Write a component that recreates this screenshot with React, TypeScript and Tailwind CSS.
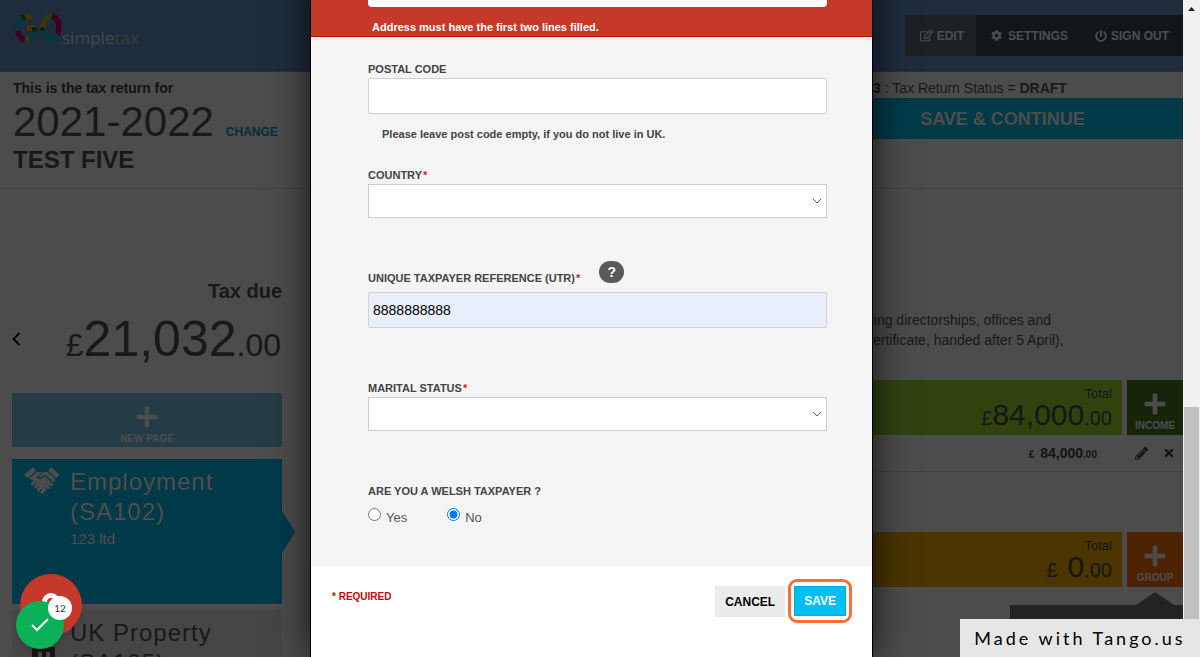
import { useState, type ReactNode } from "react";
import { FaCog, FaPencilAlt, FaPlus, FaPowerOff, FaRegEdit, FaTimes } from "react-icons/fa";

function LogoMark() {
  return (
    <svg width="48" height="31" viewBox="0 0 48 31" fill="none" strokeWidth="5.500">
      <path d="M3.500 18 Q4 9 9 5" stroke="#18b4d8" />
      <path d="M11 5 Q14 4 18 6" stroke="#f0a000" />
      <path d="M8 6 L11 4.500" stroke="#0a7a28" />
      <path d="M3.500 19 Q5 26 11 28" stroke="#d4006c" />
      <path d="M11 27 L15 27" stroke="#98c83c" />
      <path d="M20 18 Q20.500 23 17 26" stroke="#18b4d8" />
      <path d="M13 16 H22" stroke="#f0a000" />
      <path d="M18 17.500 H23" stroke="#0a7a28" strokeWidth="4" />
      <path d="M43 22 Q40 28 34 27 Q29 25 28.500 19" stroke="#18b4d8" />
      <path d="M28.500 16 Q28.500 12 30.500 9" stroke="#f0a000" />
      <path d="M28.500 18.500 V15.500" stroke="#0a7a28" strokeWidth="4" />
      <path d="M30 9 Q34 3.500 39 4" stroke="#98c83c" />
      <path d="M38 4 Q45 6 45 15 Q45 19 43 22" stroke="#d4006c" />
    </svg>
  );
}

function HandshakeIcon() {
  return (
    <svg width="36" height="28" viewBox="0 0 36 28" fill="currentColor">
      <path d="M9 0 L12 4 L4 11 L0 8 Z" />
      <path d="M27 0 L24 4 L32 11 L36 8 Z" />
      <path d="M12.500 5 L18 5 L13 10 Q14 13 17 11.500 L21 9.500 L29 17 Q29 20 26 19 L22 16 L26 20.500 Q25 23 22.500 21.500 L19 18.500 L22.500 23 Q21.500 25.500 19 24 L10 14 L5 11.500 Z" />
      <path d="M19 5 L23.500 5 L31 11.500 L29.500 15.500 L21.500 8 L16 10.500 L14.500 10 Z" />
      <g stroke="currentColor" strokeWidth="3" strokeLinecap="round">
        <path d="M8.500 17 L10 15.500" />
        <path d="M11.500 20 L13.500 17.500" />
        <path d="M14.500 23 L16.500 20.500" />
        <path d="M18 25.500 L19 24" />
      </g>
    </svg>
  );
}

function Amount({ pounds, spaced }: { pounds: string; spaced?: boolean }) {
  return (
    <p className="flex items-baseline text-[20px] leading-5 text-[#4a4a4a]">
      <span className={spaced ? "mr-2.5" : ""}>£</span>
      <span className="text-[30px] leading-[26px]">{pounds}</span>
      <span>.00</span>
    </p>
  );
}

function TotalRow({ bar, button, label, children }: { bar: string; button: string; label: string; children: ReactNode }) {
  return (
    <div className="flex gap-[5px]">
      <div className={`flex h-[55px] flex-1 flex-col items-end pt-1.5 pr-2.5 ${bar}`}>
        <span className="text-[13px] leading-4 text-[#4a4a4a]">Total</span>
        {children}
      </div>
      <button className={`flex w-14 flex-col items-center pt-3 text-[10px] leading-3 font-bold text-white ${button}`}>
        <FaPlus size={24} className="mb-1" />
        {label}
      </button>
    </div>
  );
}

function Label({ id, required, children }: { id: string; required?: boolean; children: ReactNode }) {
  return (
    <label htmlFor={id} className="block text-[11px] leading-4 font-bold text-[#444]">
      {children}
      {required && <span className="ml-px text-[#d0281c]">*</span>}
    </label>
  );
}

function SelectBox({ id }: { id: string }) {
  return (
    <div className="mt-px grid">
      <select id={id} className="col-start-1 row-start-1 h-[34px] w-full appearance-none border border-[#ccc] bg-white px-1">
        <option></option>
      </select>
      <svg width="10" height="6" viewBox="0 0 10 6" className="pointer-events-none col-start-1 row-start-1 mr-[5px] self-center justify-self-end" fill="none" stroke="#555">
        <path d="M1 1 L5 5 L9 1" />
      </svg>
    </div>
  );
}

function TaxReturnPage() {
  return (
    <div className="h-full overflow-hidden bg-white text-[#555]">
      <header className="flex h-[72px] items-start justify-between border-b border-[#999] bg-[#6593cf]">
        <a href="#" className="flex pt-3 pl-3.5">
          <LogoMark />
          <span className="mt-3.5 font-[Open_Sans,sans-serif] text-[17px] leading-6 text-white/80">
            simple<span className="text-[#c4c8d0]">tax</span>
          </span>
        </a>
        <nav className="mt-[15px] flex h-[41px] bg-[#3b4f50] text-xs font-bold text-white">
          <a href="#" className="flex items-center gap-1 bg-[#5c7178] pr-3 pl-[15px]">
            <FaRegEdit size={13} /> EDIT
          </a>
          <a href="#" className="flex items-center gap-1.5 pr-[15px] pl-[15px]">
            <FaCog size={11} /> SETTINGS
          </a>
          <a href="#" className="flex items-center gap-1 pr-3.5 pl-3">
            <FaPowerOff size={12} /> SIGN OUT
          </a>
        </nav>
      </header>

      <section className="flex h-[117px] justify-between border-b border-[#ddd] pl-[13px]">
        <div>
          <p className="pt-1.5 text-sm font-bold text-[#444]">This is the tax return for</p>
          <p className="flex items-baseline gap-3 text-[42px] leading-[48px]">
            2021-2022
            <a href="#" className="text-xs font-bold text-[#00a0d0]">CHANGE</a>
          </p>
          <h1 className="text-2xl leading-7 font-bold">TEST FIVE</h1>
        </div>
        <div className="w-[361px]">
          <p className="pt-1.5 pl-[51px] text-sm">
            <b className="text-[#444]">3</b> : Tax Return Status = <b>DRAFT</b>
          </p>
          <button className="h-[41px] w-full bg-[#00c4f5] text-lg font-bold text-white">SAVE &amp; CONTINUE</button>
        </div>
      </section>

      <div className="flex">
        <aside className="w-[295px] shrink-0 pt-[90px] pl-3">
          <div className="mr-[13px]">
            <h2 className="text-right text-xl leading-6 font-bold">Tax due</h2>
            <div className="mt-[11px] flex items-center justify-between">
              <button aria-label="Previous">
                <svg width="9" height="14" viewBox="0 0 9 14" fill="none" stroke="black" strokeWidth="1.800">
                  <path d="M7.500 1 L1.500 7 L7.500 13" />
                </svg>
              </button>
              <p className="flex items-baseline pr-px text-[32px] leading-8">
                £<span className="text-[50px] leading-[50px]">21,032</span>.00
              </p>
            </div>
            <button className="mt-[29px] flex h-[54px] w-full flex-col items-center bg-[#79c8e8] pt-3 text-[10px] leading-3 font-bold text-white">
              <FaPlus size={24} className="mb-1" />
              NEW PAGE
            </button>
          </div>
          <div className="mt-3 flex items-center">
            <div className="flex h-[145px] w-[270px] gap-2.5 bg-[#00c4f5] pt-2 pl-3 text-white">
              <HandshakeIcon />
              <div>
                <h3 className="text-2xl leading-[30px] tracking-[1px]">
                  Employment
                  <br />
                  (SA102)
                </h3>
                <p className="text-[15px] leading-6">123 ltd</p>
              </div>
            </div>
            <svg width="13" height="42" viewBox="0 0 13 42" fill="#00c4f5">
              <path d="M0 0 L13 21 L0 42 Z" />
            </svg>
          </div>
          <div className="mt-1.5 flex w-[270px] gap-2.5 bg-[#ebebeb] pt-2 pl-3">
            <svg width="36" height="60" viewBox="0 0 36 60" fill="#444">
              <path d="M8 29 H31 V60 H8 Z" />
              <path d="M14 34 H18 V42 H14 Z M22 34 H26 V42 H22 Z" fill="#ebebeb" />
            </svg>
            <h3 className="text-2xl leading-[30px] tracking-[1px]">
              UK Property
              <br />
              (SA105)
            </h3>
          </div>
        </aside>

        <main className="ml-8 flex-1 pt-[121px]">
          <p className="ml-auto w-[317px] text-sm leading-5">
            ding directorships, offices and
            <br />
            certificate, handed after 5 April),
          </p>
          <div className="mt-[30px]">
            <TotalRow bar="bg-[#a0df35]" button="bg-[#4b7820]" label="INCOME">
              <Amount pounds="84,000" />
            </TotalRow>
            <div className="flex h-[37px] items-center justify-end border-b border-[#ddd] text-[#444]">
              <p className="flex items-baseline text-[10px] font-bold">
                £<span className="ml-1.5 text-sm">84,000</span>.00
              </p>
              <button aria-label="Edit" className="ml-[38px]">
                <FaPencilAlt size={13} />
              </button>
              <button aria-label="Remove" className="mr-2 ml-[15px]">
                <FaTimes size={12} />
              </button>
            </div>
          </div>
          <div className="mt-[60px]">
            <TotalRow bar="bg-[#f8ae00]" button="bg-[#ff7400]" label="GROUP">
              <Amount pounds="0" spaced />
            </TotalRow>
          </div>
          <div className="mt-[5px] ml-auto flex w-[173px] flex-col items-end">
            <svg width="38" height="13" viewBox="0 0 38 13" className="mr-[9px]" fill="#777">
              <path d="M0 13 L19 0 L38 13 Z" />
            </svg>
            <div className="h-20 w-full bg-[#777]" />
          </div>
        </main>
      </div>
    </div>
  );
}

function DetailsForm() {
  const [utr, setUtr] = useState("8888888888");
  const [welsh, setWelsh] = useState("no");

  return (
    <form
      onSubmit={(e) => e.preventDefault()}
      className="-mt-8 flex w-[561px] flex-col bg-white shadow-[0_0_0_1px_black,0_0_36px_rgba(0,0,0,0.8)]"
    >
      <div className="border-b border-[#c40808] bg-[#c5392b] pt-[3px] pr-[45px] pb-px pl-[57px]">
        <input aria-label="Address line" className="block h-9 w-full rounded-sm bg-white px-1 text-sm" />
        <p className="mt-3 pl-1 text-[11px] leading-4 font-bold text-white">Address must have the first two lines filled.</p>
      </div>

      <div className="bg-[#f4f4f4] pt-6 pr-[45px] pb-[38px] pl-[57px]">
        <Label id="postal">POSTAL CODE</Label>
        <input id="postal" className="mt-px block h-9 w-full rounded-xs border border-[#d2d2d2] bg-white px-1 text-sm" />
        <p className="mt-3 pl-3.5 text-[11px] leading-4 font-bold text-[#444]">
          Please leave post code empty, if you do not live in UK.
        </p>

        <div className="mt-[25px]">
          <Label id="country" required>COUNTRY</Label>
          <SelectBox id="country" />
        </div>

        <div className="mt-[43px]">
          <div className="flex h-[25px] gap-[19px]">
            <div className="self-end">
              <Label id="utr" required>UNIQUE TAXPAYER REFERENCE (UTR)</Label>
            </div>
            <button type="button" aria-label="Help" className="h-[22px] w-[25px] self-start rounded-full bg-[#5a5a5a] text-sm leading-[22px] font-bold text-white">
              ?
            </button>
          </div>
          <input
            id="utr"
            value={utr}
            onChange={(e) => setUtr(e.target.value)}
            className="mt-1.5 block h-9 w-full rounded-xs border border-[#d2d2d2] bg-[#e8eefc] px-1 text-sm text-black"
          />
        </div>

        <div className="mt-[52px]">
          <Label id="marital" required>MARITAL STATUS</Label>
          <SelectBox id="marital" />
        </div>

        <fieldset className="mt-[52px]">
          <legend className="text-[11px] leading-4 font-bold text-[#444]">ARE YOU A WELSH TAXPAYER ?</legend>
          <div className="mt-[9px] flex gap-10 text-[13px] leading-5 text-[#555]">
            <label className="flex items-start gap-[5px]">
              <input type="radio" name="welsh" className="size-[13px]" checked={welsh === "yes"} onChange={() => setWelsh("yes")} />
              Yes
            </label>
            <label className="flex items-start gap-[5px]">
              <input type="radio" name="welsh" className="size-[13px]" checked={welsh === "no"} onChange={() => setWelsh("no")} />
              No
            </label>
          </div>
        </fieldset>
      </div>

      <div className="flex flex-1 items-start pt-[13px] pr-5 pb-10 pl-[21px]">
        <p className="mt-2.5 text-[10px] leading-4 font-bold text-[#c40808]">* REQUIRED</p>
        <button type="button" className="mt-[7px] mr-[3px] ml-auto h-[31px] bg-[#ebebeb] px-2.5 text-xs font-bold text-black">
          CANCEL
        </button>
        <div className="rounded-[9px] border-3 border-[#f77037] px-[3px] py-1">
          <button className="h-[30px] border border-[#00a8dc] bg-[#00bff0] px-[9px] text-xs font-bold text-white">SAVE</button>
        </div>
      </div>
    </form>
  );
}

function FloatingBadges() {
  return (
    <div className="absolute bottom-2 left-4 h-[75px] w-[66px]">
      <button aria-label="Help" className="absolute top-0 right-0 size-[62px] rounded-full bg-[#c5392b] shadow-md">
        <span className="absolute top-[19px] left-[22px] size-[18px] rounded-full border-[5px] border-white" />
      </button>
      <button aria-label="Steps done" className="absolute bottom-0 left-0 flex size-12 items-center justify-center rounded-full bg-[#0bb057] shadow-md">
        <svg width="18" height="14" viewBox="0 0 18 14" fill="none" stroke="white" strokeWidth="2">
          <path d="M1 7 L6 12 L17 1" />
        </svg>
      </button>
      <span className="absolute top-[22px] left-8 flex size-6 items-center justify-center rounded-full bg-white font-[Lato,sans-serif] text-[10px] text-[#334]">
        12
      </span>
    </div>
  );
}

export default function App() {
  return (
    <div className="relative flex h-screen overflow-hidden font-[Liberation_Sans,Arial,sans-serif]">
      <div className="relative flex-1">
        <TaxReturnPage />
        <div className="absolute inset-0 flex justify-center overflow-hidden bg-black/70">
          <DetailsForm />
        </div>
        <FloatingBadges />
      </div>

      <div className="flex w-[17px] flex-col items-center bg-[#f1f1f1]">
        <svg width="7" height="4" viewBox="0 0 7 4" className="mt-[7px]" fill="#222">
          <path d="M0 4 L3.500 0 L7 4 Z" />
        </svg>
        <div className="mt-auto h-[38%] w-[15px] bg-[#c1c1c1]" />
      </div>

      <div className="absolute right-0 bottom-0 flex h-[38px] w-60 items-center justify-center bg-[#e6e6e6] font-[Lato,sans-serif] text-lg tracking-[3px] text-black">
        Made with Tango.us
      </div>
    </div>
  );
}
